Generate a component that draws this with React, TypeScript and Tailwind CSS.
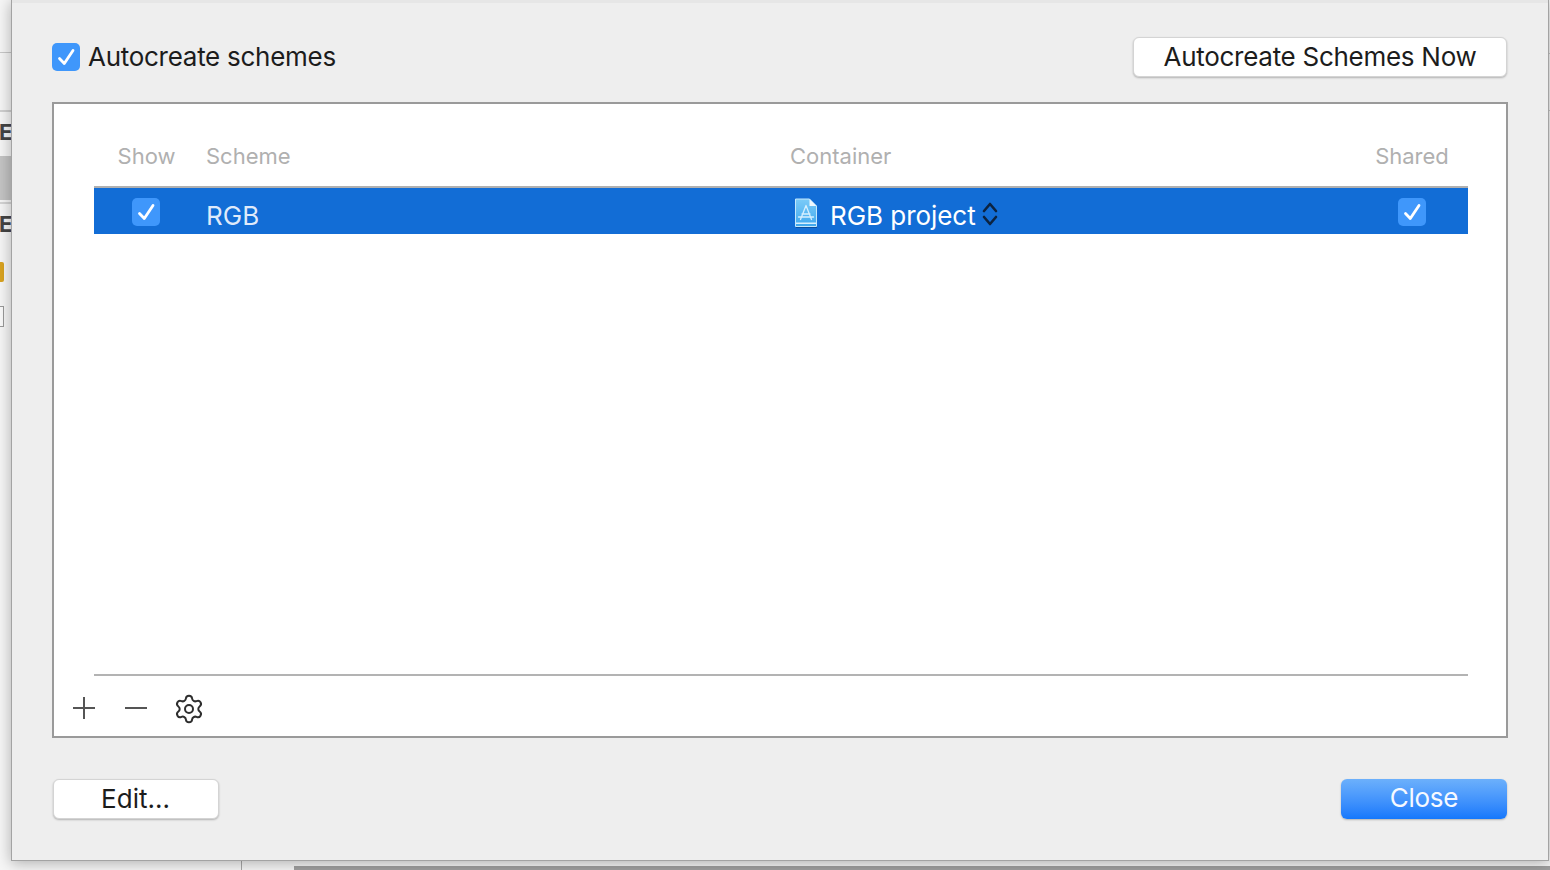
import { Settings } from "lucide-react";

const font = { fontFamily: "Inter, 'Liberation Sans', sans-serif" };

const CheckBox = () => (
  <div className="w-[28px] h-[28px] rounded-[5px] bg-[#3f97fb] shrink-0">
    <svg width="28" height="28" viewBox="0 0 28 28" fill="none">
      <path d="M7.5 15.5 L12.3 20.5 L21 7.5" stroke="#ffffff" strokeWidth="2.8" strokeLinecap="round" strokeLinejoin="round" />
    </svg>
  </div>
);

const ProjectIcon = () => (
  <svg width="24" height="30" viewBox="0 0 24 30" fill="none" className="shrink-0">
    <defs>
      <linearGradient id="doc" x1="0" y1="0" x2="0" y2="1">
        <stop offset="0" stopColor="#7ccbf8" />
        <stop offset="1" stopColor="#3fa8ee" />
      </linearGradient>
    </defs>
    <path d="M2 2 H16 L23 9 V30 H2 Z" fill="#0d4f9c" />
    <path d="M1.5 1 H15.5 L22.5 8 V28.5 H1.5 Z" fill="url(#doc)" stroke="#c4e8fc" strokeWidth="1" />
    <path d="M15.5 1 V8 H22.5 Z" fill="#eef8ff" />
    <rect x="2" y="24.5" width="20" height="1.5" fill="#d8f0fe" />
    <path d="M12 7.5 L6.5 21.5 M12 7.5 L17.5 21.5 M8 16 H16 M4.5 19 H19.5" stroke="#d6effe" strokeWidth="1.3" strokeLinecap="round" />
  </svg>
);

const Button = ({ label, className }: { label: string; className: string }) => (
  <button
    className={
      "h-[40px] rounded-[6px] bg-white border border-[#d4d4d4] shadow-[0_1px_2px_rgba(0,0,0,0.25)] text-[#1c1c1c] text-[26px] leading-[38px] flex items-center justify-center " +
      className
    }
  >
    {label}
  </button>
);

const App = () => {
  return (
    <div className="w-[1550px] h-[870px] overflow-hidden bg-[#f6f6f6] flex flex-col" style={font}>
      <div className="flex h-[861px] shrink-0">
        {/* window behind, left edge */}
        <div className="w-[11px] shrink-0 bg-[#f6f6f6] flex flex-col overflow-hidden">
          <div className="mt-[52px] h-[1px] bg-[#c8c8c8]" />
          <div className="mt-[57px] h-[2px] bg-[#d0d0d0]" />
          <div className="mt-[7px] h-[26px] text-[#444444] text-[22px] font-bold leading-[26px] -ml-[1px]">E</div>
          <div className="h-[11px]" />
          <div className="h-[44px] bg-[#c4c4c4]" />
          <div className="mt-[2px] h-[2px] bg-[#d4d4d4]" />
          <div className="mt-[7px] h-[26px] text-[#444444] text-[22px] font-bold leading-[26px] -ml-[1px]">E</div>
          <div className="mt-[25px] w-[4px] h-[20px] bg-[#d9a320] rounded-r-[2px]" />
          <div className="mt-[24px] w-[4px] h-[21px] border border-l-0 border-[#9a9a9a] bg-[#fafafa]" />
        </div>

        {/* dialog */}
        <div className="w-[1538px] shrink-0 bg-[#eeeeee] border-l border-r border-b border-[#a3a3a3] shadow-[0_2px_14px_rgba(0,0,0,0.3)] z-10 flex flex-col pl-[40px] pr-[40px]">
          <div className="h-[3px] -mx-[40px] bg-[#e6e6e6] shrink-0" />
          <div className="flex items-center justify-between h-[99px] pt-[9px] pr-[1px] shrink-0">
            <div className="flex items-center gap-[8px]">
              <CheckBox />
              <span className="text-[26px] tracking-[-0.28px] text-[#1c1c1c] leading-[32px]">Autocreate schemes</span>
            </div>
            <Button label="Autocreate Schemes Now" className="w-[374px] tracking-[-0.28px]" />
          </div>

          <div className="h-[636px] bg-white border-2 border-[#9a9a9a] flex flex-col pl-[40px] pr-[38px] shrink-0">
            <div className="h-[82px] flex items-center text-[22px] text-[#b0b0b0] pt-[22px] shrink-0">
              <div className="w-[105px] text-center">Show</div>
              <div className="w-[591px] pl-[7px]">Scheme</div>
              <div className="flex-1">Container</div>
              <div className="w-[112px] text-center">Shared</div>
            </div>
            <div className="h-[48px] shrink-0 bg-[#126dd6] border-t-[2px] border-[#b0b0b0] flex items-center text-[26px] text-white">
              <div className="w-[104px] flex justify-center mt-[2px]">
                <CheckBox />
              </div>
              <div className="w-[592px] pl-[8px] text-[#dfeafa] pt-[8px]">RGB</div>
              <div className="flex-1 flex items-center">
                <div className="ml-[4px] mr-[12px] mt-[4px]">
                  <ProjectIcon />
                </div>
                <span className="pt-[8px] tracking-[-0.05px]">RGB project</span>
                <svg width="16" height="26" viewBox="0 0 16 26" fill="none" className="ml-[6px] mt-[6px]">
                  <path d="M2 10 L8 3 L14 10 M2 16 L8 23 L14 16" stroke="#0c2340" strokeWidth="2.6" strokeLinecap="round" strokeLinejoin="round" />
                </svg>
              </div>
              <div className="w-[112px] flex justify-center mt-[2px]">
                <CheckBox />
              </div>
            </div>
            <div className="flex-1" />
            <div className="h-[2px] bg-[#b3b3b3] shrink-0" />
            <div className="h-[60px] shrink-0 flex items-center -ml-[22px] pt-[4px]">
              <svg width="24" height="24" viewBox="0 0 24 24" className="mr-[28px]">
                <path d="M12 1 V23 M1 12 H23" stroke="#555555" strokeWidth="2" fill="none" />
              </svg>
              <svg width="24" height="24" viewBox="0 0 24 24" className="mr-[25px]">
                <path d="M1 12 H23" stroke="#555555" strokeWidth="2" fill="none" />
              </svg>
              <Settings size={32} strokeWidth={1.5} color="#2e2e2e" className="mt-[1px]" />
            </div>
          </div>

          <div className="flex justify-between items-start pt-[41px] pl-[1px] pr-[1px]">
            <Button label="Edit..." className="w-[166px] pr-[1px]" />
            <button className="w-[166px] h-[40px] rounded-[6px] bg-gradient-to-b from-[#6cb0fb] to-[#1478fc] shadow-[0_1px_2px_rgba(0,0,0,0.25)] text-[#f6f9ff] text-[26px] leading-[38px] tracking-[-0.28px] flex items-center justify-center pb-[2px]">
              Close
            </button>
          </div>
        </div>

        {/* window behind, right edge */}
        <div className="w-[1px] shrink-0 bg-[#f6f6f6] flex flex-col">
          <div className="mt-[53px] h-[1px] bg-[#c8c8c8]" />
          <div className="mt-[56px] h-[1px] bg-[#c8c8c8]" />
        </div>
      </div>

      {/* window behind, bottom edge */}
      <div className="h-[9px] shrink-0 flex">
        <div className="ml-[241px] w-[1px] bg-[#a8a8a8]" />
        <div className="ml-[52px] mt-[5px] flex-1 bg-[#a0a0a0]" />
      </div>
    </div>
  );
};

export default App;
